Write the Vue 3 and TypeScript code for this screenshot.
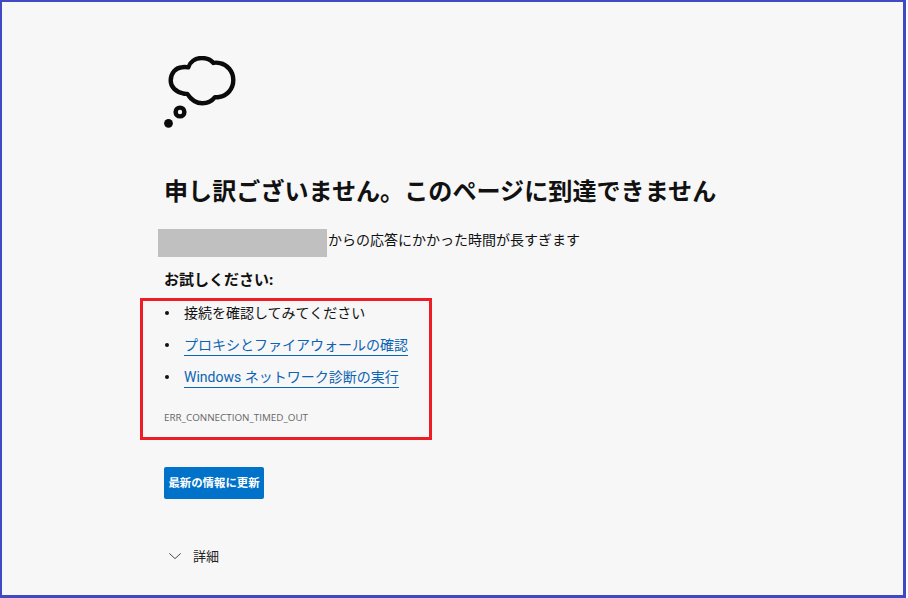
<script setup lang="ts">
interface Step { label: string; link: boolean }
const steps: Step[] = [
  { label: '接続を確認してみてください', link: false },
  { label: 'プロキシとファイアウォールの確認', link: true },
  { label: 'Windows ネットワーク診断の実行', link: true },
]
</script>

<template>
  <main class="page">
    <div class="content">
      <svg class="cloud" width="74" height="74" viewBox="0 0 74 74" aria-hidden="true">
        <path
          d="M24.3 11.3C26 6 31 2 37.7 2C43 2 47 4 49.3 7C51 6.5 54 6.7 56 7.2C63 8.5 69.3 15 69.3 24C69.3 33 63 40 55 41C53.5 41.3 52 41.3 51 41.2C48 45 43.5 47.3 38.3 47.3C32.5 47.3 27 43.5 23.3 38C21.5 37.8 20.5 37.8 19 37.3C12 36 6.7 31 6.7 24.7C6.7 17 12 11.5 18 11.2C20.5 11 22.5 11 24.3 11.3Z"
          fill="none" stroke="#0b0b0b" stroke-width="4.4" stroke-linejoin="round"
        />
        <circle cx="16" cy="56" r="4.4" fill="none" stroke="#0b0b0b" stroke-width="4.4" />
        <circle cx="4.5" cy="67.3" r="4.4" fill="#0b0b0b" />
      </svg>

      <h1 class="title">申し訳ございません。このページに到達できません</h1>

      <p class="reason"><span class="redacted"></span><span>からの応答にかかった時間が長すぎます</span></p>

      <p class="try">お試しください:</p>

      <ul class="steps">
        <li v-for="step in steps" :key="step.label" class="step">
          <a v-if="step.link" class="link" href="#">{{ step.label }}</a>
          <span v-else>{{ step.label }}</span>
        </li>
      </ul>

      <p class="code">ERR_CONNECTION_TIMED_OUT</p>

      <button class="reload" type="button">最新の情報に更新</button>

      <div class="details">
        <svg width="12" height="6" viewBox="0 0 12 6" aria-hidden="true">
          <path d="M0.3 0.4L6 5.6L11.7 0.4" fill="none" stroke="#4a4a4a" stroke-width="1" />
        </svg>
        <span>詳細</span>
      </div>
    </div>
    <div class="callout"></div>
  </main>
</template>

<style>
html, body { margin: 0; padding: 0; }
</style>

<style scoped>
.page {
  position: relative;
  box-sizing: border-box;
  width: 906px;
  height: 598px;
  overflow: hidden;
  background: #f7f7f7;
  border: solid #4048c4;
  border-width: 2px 3px 3px 2px;
  font-family: "Noto Sans", "Noto Sans CJK JP", sans-serif;
  color: #111;
}
.content {
  display: flex;
  flex-direction: column;
  align-items: flex-start;
  padding: 54px 0 0 162px;
}
.cloud { display: block; }
.title {
  margin: 45px 0 0;
  font-size: 24.1px;
  line-height: 32px;
  font-weight: 700;
  white-space: nowrap;
}
.reason {
  display: flex;
  align-items: flex-start;
  margin: 22px 0 0 -6px;
  font-size: 14px;
  line-height: 22px;
}
.redacted {
  width: 169px;
  height: 28px;
  margin-right: 1px;
  background: #c0c0c0;
}
.try {
  margin: 9px 0 0;
  font-size: 15px;
  line-height: 26px;
  font-weight: 700;
}
.steps {
  display: flex;
  flex-direction: column;
  gap: 12px;
  margin: 11px 0 0;
  padding: 0;
  list-style: none;
}
.step {
  position: relative;
  height: 20px;
  padding-left: 20px;
  font-size: 14px;
  line-height: 20px;
}
.step::before {
  content: "";
  position: absolute;
  left: 1px;
  top: 8px;
  width: 4px;
  height: 4px;
  border-radius: 50%;
  background: #111;
}
.link {
  display: inline-block;
  font-family: Roboto, "Noto Sans CJK JP", sans-serif;
  color: #0b64b4;
  text-decoration: none;
  border-bottom: 1px solid #0b64b4;
  line-height: 20px;
}
.code {
  margin: 23px 0 0;
  font-family: "Open Sans", "Noto Sans", sans-serif;
  font-size: 9.85px;
  line-height: 14px;
  color: #666;
}
.reload {
  width: 100px;
  height: 32px;
  margin-top: 43px;
  padding: 0;
  border: 0;
  border-radius: 2px;
  background: #0072c9;
  color: #fff;
  font: 700 11.4px/32px "Noto Sans", "Noto Sans CJK JP", sans-serif;
}
.details {
  display: flex;
  align-items: center;
  gap: 12px;
  margin: 40px 0 0 5px;
  font-size: 13px;
  line-height: 34px;
  color: #222;
}
.callout {
  position: absolute;
  left: 138px;
  top: 296px;
  width: 286px;
  height: 136px;
  border: 3px solid #ee1c25;
}
</style>
